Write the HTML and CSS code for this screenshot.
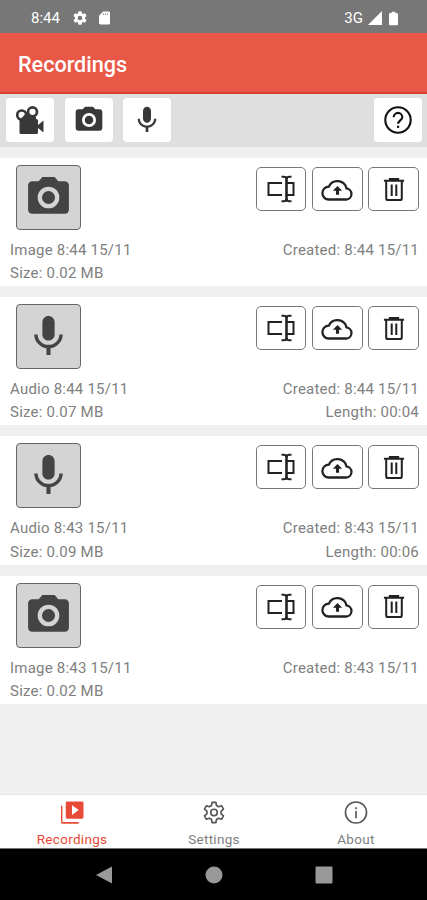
FILE: index.html
```html
<!DOCTYPE html>
<html lang="en">
<head>
<meta charset="utf-8">
<title>Recordings</title>
<link rel="stylesheet" href="styles.css">
</head>
<body>
<svg class="defs" aria-hidden="true">
  <symbol id="camera" viewBox="0 0 24 24"><path fill-rule="evenodd" d="M9 2 7.200 4H4c-1.100 0-2 .9-2 2v12c0 1.100.9 2 2 2h16c1.100 0 2-.9 2-2V6c0-1.100-.9-2-2-2h-3.200L15 2zM12 6.700a5.300 5.300 0 1 1 0 10.600a5.300 5.300 0 1 1 0-10.600zM12 8.800a3.200 3.200 0 1 0 0 6.400a3.200 3.200 0 1 0 0-6.400z"/></symbol>
  <symbol id="mic" viewBox="0 0 24 24"><path d="M12 14c1.660 0 3-1.340 3-3V5c0-1.660-1.340-3-3-3S9 3.340 9 5v6c0 1.660 1.340 3 3 3zm5.300-3c0 3-2.540 5.100-5.300 5.100S6.700 14 6.700 11H5c0 3.410 2.720 6.230 6 6.720V21h2v-3.280c3.280-.48 6-3.300 6-6.720z"/></symbol>
  <symbol id="film" viewBox="0 0 30 30"><g fill="none" stroke="currentColor" stroke-width="2.700"><circle cx="6.700" cy="10" r="4.500"/><circle cx="17.500" cy="6.800" r="4.500"/></g><path d="M10 9.500 13 8l2 3.500 6 .5v2h.5q1.500 0 1.500 1.500V20l5.500-4.500v12L23 23v4.500q0 1.500-1.500 1.500H6q-1.500 0-1.500-1.500V15z"/></symbol>
  <symbol id="rename" viewBox="0 0 28 28"><g fill="none" stroke="currentColor" stroke-width="2"><path d="M15 8H1.500v12H15M20 8h6.500v12H20"/><path stroke-width="2.600" d="M19.500 3v22"/><path d="M14.500 1.800h2q3 0 3 2.200q0-2.200 3-2.200h2M14.500 26.200h2q3 0 3-2.200q0 2.200 3 2.200h2"/></g></symbol>
  <symbol id="cloud" viewBox="0 0 32 24"><path fill="none" stroke="currentColor" stroke-width="2.200" stroke-linejoin="round" d="M7.500 21.700a6.200 6.200 0 0 1 .1-12.400A9 9 0 0 1 24.700 11a5.400 5.400 0 0 1 .3 10.700z"/><path d="m16 8.500 4.500 4.700h-3v3.800h-3v-3.800h-3z"/></symbol>
  <symbol id="trash" viewBox="0 0 24 26"><path fill="none" stroke="currentColor" stroke-width="2.200" d="M1 3.500h22M7.500 3V1.500h9V3M3.500 4v18.500q0 2 2 2h13q2 0 2-2V4M9.500 7.500V20M14.500 7.500V20"/></symbol>
  <symbol id="gear" viewBox="0 0 24 24"><path d="M19.430 12.980c.04-.32.070-.64.070-.98s-.03-.66-.07-.98l2.110-1.650c.19-.15.240-.42.120-.64l-2-3.460c-.12-.22-.39-.3-.61-.22l-2.490 1c-.52-.4-1.080-.73-1.690-.98l-.38-2.650C14.460 2.180 14.250 2 14 2h-4c-.25 0-.46.180-.49.420l-.38 2.650c-.61.250-1.170.59-1.690.98l-2.490-1c-.23-.09-.49 0-.61.220l-2 3.460c-.13.220-.07.490.12.640l2.110 1.650c-.04.320-.07.650-.07.980s.03.660.07.980l-2.110 1.650c-.19.150-.24.420-.12.640l2 3.460c.12.220.39.300.61.220l2.490-1c.52.400 1.080.73 1.690.98l.38 2.650c.03.240.24.420.49.420h4c.25 0 .46-.18.490-.42l.38-2.650c.61-.25 1.170-.59 1.690-.98l2.490 1c.23.090.49 0 .61-.22l2-3.460c.12-.22.070-.49-.12-.64zM12 15.500a3.500 3.500 0 1 1 0-7a3.500 3.500 0 0 1 0 7z"/></symbol>
  <symbol id="gear-line" viewBox="0 0 24 24"><g fill="none" stroke="currentColor" stroke-width="1.700" stroke-linejoin="round"><path d="M10 1.500h4l.6 3.200 2.200 1.300 3.100-1.100 2 3.500-2.500 2.100v3l2.500 2.100-2 3.500-3.100-1.100-2.200 1.300-.6 3.200h-4l-.6-3.200L7.200 18l-3.100 1.100-2-3.500 2.500-2.100v-3L2.100 8.400l2-3.500L7.200 6l2.200-1.300z"/><circle cx="12" cy="12" r="3.400"/></g></symbol>
</svg>

<div class="status">
  <span class="time">8:44</span>
  <svg class="s-gear"><use href="#gear"/></svg>
  <svg class="s-sd" viewBox="0 0 12 14"><path d="M4.500 0H10.500Q12 0 12 1.500V12.500Q12 14 10.500 14H1.500Q0 14 0 12.500V4.500z"/><path class="sd-pins" d="M4.800 2v1.800M7 2v1.800M9.200 2v1.800"/></svg>
  <span class="net">3G</span>
  <svg class="s-signal" viewBox="0 0 14 14"><path d="M14 0v14H0z"/></svg>
  <svg class="s-battery" viewBox="0 0 10 15"><path d="M3 0h4v1.500h1.500Q10 1.500 10 3v10.500Q10 15 8.500 15h-7Q0 15 0 13.500V3Q0 1.500 1.500 1.500H3z"/></svg>
</div>
<header class="title">Recordings</header>
<div class="toolbar">
  <button class="tool"><svg class="i-film"><use href="#film"/></svg></button>
  <button class="tool"><svg class="i-tool"><use href="#camera"/></svg></button>
  <button class="tool"><svg class="i-tool"><use href="#mic"/></svg></button>
  <button class="tool help"><svg class="i-help" viewBox="0 0 28 28"><g fill="none" stroke="currentColor" stroke-width="2.100"><circle cx="14" cy="14" r="12.700"/><path d="M9.700 11.200a4.300 4.300 0 0 1 8.600 0c0 3-4.200 3.300-4.200 6.600"/></g><path d="M13 19.700h2.200v2.200H13z"/></svg></button>
</div>

<main class="list">
  <article class="item">
    <div class="top"><div class="thumb"><svg><use href="#camera"/></svg></div>
      <div class="actions"><button><svg class="i-rename"><use href="#rename"/></svg></button><button><svg class="i-cloud"><use href="#cloud"/></svg></button><button><svg class="i-trash"><use href="#trash"/></svg></button></div></div>
    <div class="row"><span>Image 8:44 15/11</span><span>Created: 8:44 15/11</span></div>
    <div class="row"><span>Size: 0.02 MB</span></div>
  </article>
  <article class="item">
    <div class="top"><div class="thumb"><svg><use href="#mic"/></svg></div>
      <div class="actions"><button><svg class="i-rename"><use href="#rename"/></svg></button><button><svg class="i-cloud"><use href="#cloud"/></svg></button><button><svg class="i-trash"><use href="#trash"/></svg></button></div></div>
    <div class="row"><span>Audio 8:44 15/11</span><span>Created: 8:44 15/11</span></div>
    <div class="row"><span>Size: 0.07 MB</span><span>Length: 00:04</span></div>
  </article>
  <article class="item">
    <div class="top"><div class="thumb"><svg><use href="#mic"/></svg></div>
      <div class="actions"><button><svg class="i-rename"><use href="#rename"/></svg></button><button><svg class="i-cloud"><use href="#cloud"/></svg></button><button><svg class="i-trash"><use href="#trash"/></svg></button></div></div>
    <div class="row"><span>Audio 8:43 15/11</span><span>Created: 8:43 15/11</span></div>
    <div class="row"><span>Size: 0.09 MB</span><span>Length: 00:06</span></div>
  </article>
  <article class="item">
    <div class="top"><div class="thumb"><svg><use href="#camera"/></svg></div>
      <div class="actions"><button><svg class="i-rename"><use href="#rename"/></svg></button><button><svg class="i-cloud"><use href="#cloud"/></svg></button><button><svg class="i-trash"><use href="#trash"/></svg></button></div></div>
    <div class="row"><span>Image 8:43 15/11</span><span>Created: 8:43 15/11</span></div>
    <div class="row"><span>Size: 0.02 MB</span></div>
  </article>
</main>

<nav class="tabs">
  <a class="tab active"><svg viewBox="0 0 24 24"><path fill-rule="evenodd" d="M7 .5h15.500Q24 .5 24 2v15q0 1.500-1.500 1.500H7q-1.500 0-1.500-1.500V2Q5.500.5 7 .5zM12 4.500v10l7-5z"/><path d="M.5 5H2v17h17v1.700H2Q.5 23.700.5 22z"/></svg><span>Recordings</span></a>
  <a class="tab"><svg><use href="#gear-line"/></svg><span>Settings</span></a>
  <a class="tab"><svg viewBox="0 0 24 24"><circle cx="12" cy="12" r="11" fill="none" stroke="currentColor" stroke-width="1.700"/><path d="M11.200 10.500h1.700V18h-1.700zM11.200 6.500h1.700v2h-1.700z"/></svg><span>About</span></a>
</nav>
<div class="system">
  <svg viewBox="0 0 18 20"><path d="M17 1.500v17L1 10z"/></svg>
  <svg viewBox="0 0 18 18"><circle cx="9" cy="9" r="8.500"/></svg>
  <svg viewBox="0 0 18 18"><rect x=".5" y=".5" width="17" height="17" rx="1"/></svg>
</div>
</body>
</html>
```

FILE: styles.css
```css
* { box-sizing: border-box; }
body {
  margin: 0;
  width: 427px;
  height: 900px;
  display: flex;
  flex-direction: column;
  overflow: hidden;
  background: #f0f0f0;
  font-family: Roboto, sans-serif;
}
svg { display: block; fill: currentColor; flex: none; }
button { padding: 0; border: 0; color: #222; display: flex; align-items: center; justify-content: center; }
.defs { width: 0; height: 0; position: absolute; }

.status {
  height: 33px;
  flex: none;
  display: flex;
  align-items: center;
  padding: 3px 29px 0 31px;
  background: #777;
  color: #fff;
  font-size: 15px;
}
.time { width: 41px; }
.s-gear { width: 16px; height: 16px; }
.s-sd { width: 11px; height: 14px; margin-left: 11px; }
.sd-pins { stroke: #888; stroke-width: 1; }
.net { margin-left: auto; font-size: 15px; }
.s-signal { width: 14px; height: 14px; margin-left: 5px; }
.s-battery { width: 9px; height: 15px; margin-left: 7px; }

.title {
  height: 61px;
  flex: none;
  padding-left: 18px;
  background: #e95747;
  border-bottom: 2px solid #d8402f;
  color: #fff;
  font-size: 21.600px;
  font-weight: 500;
  line-height: 64px;
}
.toolbar {
  height: 53px;
  flex: none;
  display: flex;
  gap: 10.700px;
  padding: 4px 5px 0 6px;
  background: #dfdfdf;
}
.tool { width: 48px; height: 44px; border-radius: 4px; background: #fff; color: #383838; }
.help { margin-left: auto; color: #111; }
.i-film { width: 30px; height: 30px; }
.i-tool { width: 32px; height: 32px; }
.i-help { width: 28px; height: 28px; }

.list { flex: 1; padding-top: 11px; display: flex; flex-direction: column; gap: 11px; }
.item { height: 128.200px; flex: none; background: #fff; padding: 7px 8px 0 10px; }
.top { display: flex; justify-content: space-between; height: 74px; padding-left: 6px; }
.thumb {
  width: 65px;
  height: 65px;
  display: flex;
  align-items: center;
  justify-content: center;
  border: 1px solid #666;
  border-radius: 4px;
  background: #d4d4d4;
  color: #444;
}
.thumb svg { width: 49px; height: 49px; }
.actions { display: flex; gap: 5.800px; padding-top: 2px; }
.actions button { width: 50.600px; height: 44px; border: 1px solid #777; border-radius: 5px; background: #fff; }
.i-rename { width: 28px; height: 28px; }
.i-cloud { width: 33px; height: 25px; }
.i-trash { width: 22px; height: 25px; }
.row {
  display: flex;
  justify-content: space-between;
  height: 23.200px;
  line-height: 23.200px;
  color: #808080;
  font-size: 15px;
  letter-spacing: .22px;
}

.tabs {
  height: 55px;
  flex: none;
  display: grid;
  grid-template-columns: 142px 1fr 142px;
  padding: 6px 0 0 1px;
  background: #fff;
  border-top: 1px solid #e6e6e6;
  border-bottom: 1px solid #777;
}
.tab { display: flex; flex-direction: column; align-items: center; gap: 7px; color: #808080; font-size: 13.500px; line-height: 17px; letter-spacing: .3px; }
.tab svg { width: 24px; height: 23px; color: #555; }
.tab.active, .tab.active svg { color: #e84a38; }
.system {
  height: 51px;
  flex: none;
  display: flex;
  justify-content: center;
  align-items: center;
  gap: 92px;
  background: #000;
  color: #999;
}
.system svg { width: 18px; height: 20px; }
```
